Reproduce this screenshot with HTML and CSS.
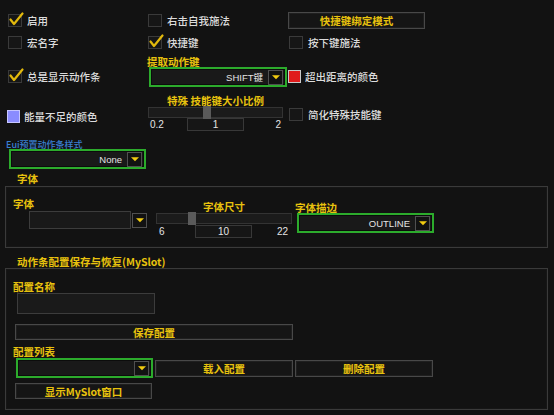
FILE: index.html
```html
<!DOCTYPE html>
<html lang="zh">
<head>
<meta charset="utf-8">
<link rel="stylesheet" href="styles.css">
</head>
<body>
<div class="page">
  <div class="top">
    <label class="chk r1"><span class="box"><svg class="tick" viewBox="0 0 15 15"><path d="M1.5 7.5 L5 12 L13.5 1.5"/></svg></span>启用</label>
    <label class="chk r1"><span class="box"></span>右击自我施法</label>
    <div class="cell"><div class="btn bind">快捷键绑定模式</div></div>

    <label class="chk r2"><span class="box"></span>宏名字</label>
    <label class="chk r2"><span class="box"><svg class="tick" viewBox="0 0 15 15"><path d="M1.5 7.5 L5 12 L13.5 1.5"/></svg></span>快捷键</label>
    <label class="chk r2 c3"><span class="box"></span>按下键施法</label>

    <label class="chk r3"><span class="box"><svg class="tick" viewBox="0 0 15 15"><path d="M1.5 7.5 L5 12 L13.5 1.5"/></svg></span>总是显示动作条</label>
    <div class="cell">
      <div class="ylabel key-label">提取动作键</div>
      <div class="dd green key-dd"><span class="val">SHIFT键</span><span class="arrow"><svg viewBox="0 0 9 5"><polygon points="0,0 9,0 4.5,4.5"/></svg></span></div>
    </div>
    <div class="swatchrow r3"><span class="swatch red"></span>超出距离的颜色</div>

    <div class="swatchrow r3 c1"><span class="swatch blue"></span>能量不足的颜色</div>
    <div class="slider s1">
      <div class="ylabel slabel">特殊 技能键大小比例</div>
      <div class="track"><span class="thumb t1"></span></div>
      <div class="nums"><span class="nmin">0.2</span><span class="nval">1</span><span class="nmax">2</span></div>
    </div>
    <label class="chk r4 c3"><span class="box"></span>简化特殊技能键</label>
  </div>

  <div class="eui">Eui预置动作条样式</div>
  <div class="dd green eui-dd"><span class="val">None</span><span class="arrow"><svg viewBox="0 0 9 5"><polygon points="0,0 9,0 4.5,4.5"/></svg></span></div>

  <div class="ylabel sec-title font-title">字体</div>
  <div class="frame font-frame">
    <div class="fcol-a">
      <div class="ylabel flabel">字体</div>
      <div class="dd plain font-dd"><span class="field"></span><span class="arrow"><svg viewBox="0 0 9 5"><polygon points="0,0 9,0 4.5,4.5"/></svg></span></div>
    </div>
    <div class="slider s2">
      <div class="ylabel slabel">字体尺寸</div>
      <div class="track"><span class="thumb t2"></span></div>
      <div class="nums"><span class="nmin">6</span><span class="nval">10</span><span class="nmax">22</span></div>
    </div>
    <div class="fcol-c">
      <div class="ylabel clabel">字体描边</div>
      <div class="dd green outline-dd"><span class="val">OUTLINE</span><span class="arrow"><svg viewBox="0 0 9 5"><polygon points="0,0 9,0 4.5,4.5"/></svg></span></div>
    </div>
  </div>

  <div class="ylabel sec-title slot-title">动作条配置保存与恢复(MySlot)</div>
  <div class="frame slot-frame">
    <div class="ylabel name-label">配置名称</div>
    <div class="input name-input"></div>
    <div class="btn save-btn">保存配置</div>
    <div class="ylabel list-label">配置列表</div>
    <div class="list-row">
      <div class="dd green list-dd"><span class="val"></span><span class="arrow"><svg viewBox="0 0 9 5"><polygon points="0,0 9,0 4.5,4.5"/></svg></span></div>
      <div class="btn row-btn">载入配置</div>
      <div class="btn row-btn">删除配置</div>
    </div>
    <div class="btn show-btn">显示MySlot窗口</div>
  </div>
</div>
</body>
</html>
```
FILE: styles.css
```css
* { box-sizing: border-box; }
html, body { margin: 0; padding: 0; }
body {
  width: 554px;
  height: 415px;
  overflow: hidden;
  background: #121212;
  font-family: "Noto Sans CJK SC", "Liberation Sans", sans-serif;
  font-size: 10.5px;
  font-weight: 500;
  color: #dcdcdc;
}
.page { padding-top: 12px; }

.top {
  display: grid;
  grid-template-columns: 140px 140px 1fr;
  grid-template-rows: 23px 21px 40px 44px;
  padding-left: 8px;
}
.cell { display: flex; flex-direction: column; align-items: flex-start; }

.chk {
  display: flex;
  align-items: center;
  gap: 5px;
  height: 13px;
  line-height: 13px;
  align-self: start;
  white-space: nowrap;
}
.r1 { margin-top: 2px; }
.r2 { margin-top: 1px; }
.r3 { margin-top: 14px; }
.r4 { margin-top: 12px; }
.c3 { margin-left: 1px; }

.box {
  position: relative;
  flex: none;
  width: 14px;
  height: 13px;
  border: 1px solid #3a3a3a;
  background: #161616;
}
.tick {
  position: absolute;
  left: 0;
  top: -3px;
  width: 15px;
  height: 15px;
  fill: none;
  stroke: #e2b90c;
  stroke-width: 2.2;
  stroke-linecap: round;
  stroke-linejoin: round;
}

.swatchrow {
  display: flex;
  align-items: center;
  gap: 4px;
  height: 13px;
  line-height: 13px;
  align-self: start;
  white-space: nowrap;
}
.swatchrow.c1 { margin-left: -1px; }
.swatch {
  flex: none;
  width: 13px;
  height: 13px;
  border: 1px solid #bdbdbd;
}
.swatch.red { background: #e01c1c; border-color: #c9c9c9; }
.swatch.blue { background: #8a8cff; border-color: #c6c6ff; }

.ylabel { color: #e8c20e; white-space: nowrap; font-weight: 700; }

.btn {
  display: flex;
  align-items: center;
  justify-content: center;
  color: #e8c20e;
  font-weight: 700;
  background: #151515;
  border: 1px solid #484848;
  box-shadow: inset 0 0 0 1px #1f1f1f;
  white-space: nowrap;
}
.bind { width: 137px; height: 17px; line-height: 15px; }

/* dropdowns */
.dd {
  display: flex;
  align-items: center;
  justify-content: flex-end;
  height: 20px;
  background: #191919;
}
.dd.green {
  border: 2px solid #2cab2c;
  box-shadow: inset 0 0 0 1px #0c0c0c;
}
.dd .val {
  font-family: "Liberation Sans", "Noto Sans CJK SC", sans-serif;
  font-size: 9.5px;
  font-weight: 400;
  color: #e4e4e4;
  margin-right: 5px;
  white-space: nowrap;
}
.arrow {
  flex: none;
  display: flex;
  align-items: center;
  justify-content: center;
  width: 15px;
  height: 15px;
  border: 1px solid #505050;
  background: #121212;
  margin-right: 2px;
}
.arrow svg { width: 8px; height: 5px; fill: #f2cc10; }

.key-label { line-height: 11px; margin-left: -1px; }
.key-dd { width: 138px; margin-left: 1px; }

/* sliders */
.slider { display: flex; flex-direction: column; }
.slabel { text-align: center; line-height: 10px; }
.track {
  position: relative;
  height: 11px;
  margin-top: 1px;
  border: 1px solid #333;
  background: #1b1b1b;
}
.thumb {
  position: absolute;
  top: -2px;
  width: 8px;
  height: 13px;
  background: #5a5a5a;
}
.nums {
  display: grid;
  grid-template-columns: 39px 57px 1fr;
  height: 13px;
  font-family: "Liberation Sans", sans-serif;
  font-size: 10px;
  font-weight: 400;
  line-height: 13px;
  color: #e4e4e4;
}
.nmin { padding-left: 2px; }
.nval {
  text-align: center;
  border: 1px solid #383838;
  background: #161616;
  line-height: 11px;
}
.nmax { text-align: right; padding-right: 2px; }

.s1 { width: 135px; }
.t1 { left: 54px; }
.s2 { width: 136px; margin-left: 9px; margin-top: 15px; }
.t2 { left: 31px; }
.s2 .nums { margin-top: 1px; }
.s2 .nmin { padding-left: 3px; }
.s2 .nmax { padding-right: 4px; }

/* eui */
.eui {
  color: #3a7fd2;
  font-size: 9px;
  line-height: 9px;
  margin-left: 6px;
}
.eui-dd { width: 137px; margin-left: 9px; }

.sec-title { line-height: 10px; margin-left: 17px; }
.font-title { margin-top: 5px; }

.frame {
  margin-left: 5px;
  width: 543px;
  border: 1px solid #3a3a3a;
  box-shadow: inset 0 0 0 1px #161616;
}
.font-frame {
  display: flex;
  align-items: flex-start;
  height: 62px;
  margin-top: 2px;
}
.fcol-a { width: 141px; padding-left: 7px; }
.flabel { margin-top: 11px; line-height: 11px; }
.font-dd {
  margin-top: 2px;
  margin-left: 16px;
  width: 118px;
  height: 18px;
  background: transparent;
}
.dd.plain .field {
  flex: 1;
  height: 18px;
  border: 1px solid #3c3c3c;
  background: #191919;
}
.dd.plain .arrow { margin-right: 0; margin-left: 1px; }

.fcol-c { margin-left: 3px; margin-top: 16px; }
.clabel { line-height: 10px; }
.outline-dd { width: 137px; margin-left: 2px; }

.slot-title { margin-top: 9px; }
.slot-frame {
  display: flex;
  flex-direction: column;
  align-items: flex-start;
  height: 142px;
  margin-top: 1px;
}
.name-label { margin-top: 13px; margin-left: 7px; line-height: 10px; }
.name-input {
  margin-top: 1px;
  margin-left: 11px;
  width: 138px;
  height: 21px;
  border: 1px solid #3c3c3c;
  background: #1a1a1a;
}
.save-btn { margin-top: 10px; margin-left: 9px; width: 278px; height: 16px; }
.list-label { margin-top: 7px; margin-left: 7px; line-height: 10px; }
.list-row { display: flex; align-items: center; margin-top: 1px; margin-left: 10px; }
.list-dd { width: 137px; }
.row-btn { width: 138px; height: 17px; margin-left: 2px; }
.show-btn { margin-top: 5px; margin-left: 9px; width: 137px; height: 16px; }
```
